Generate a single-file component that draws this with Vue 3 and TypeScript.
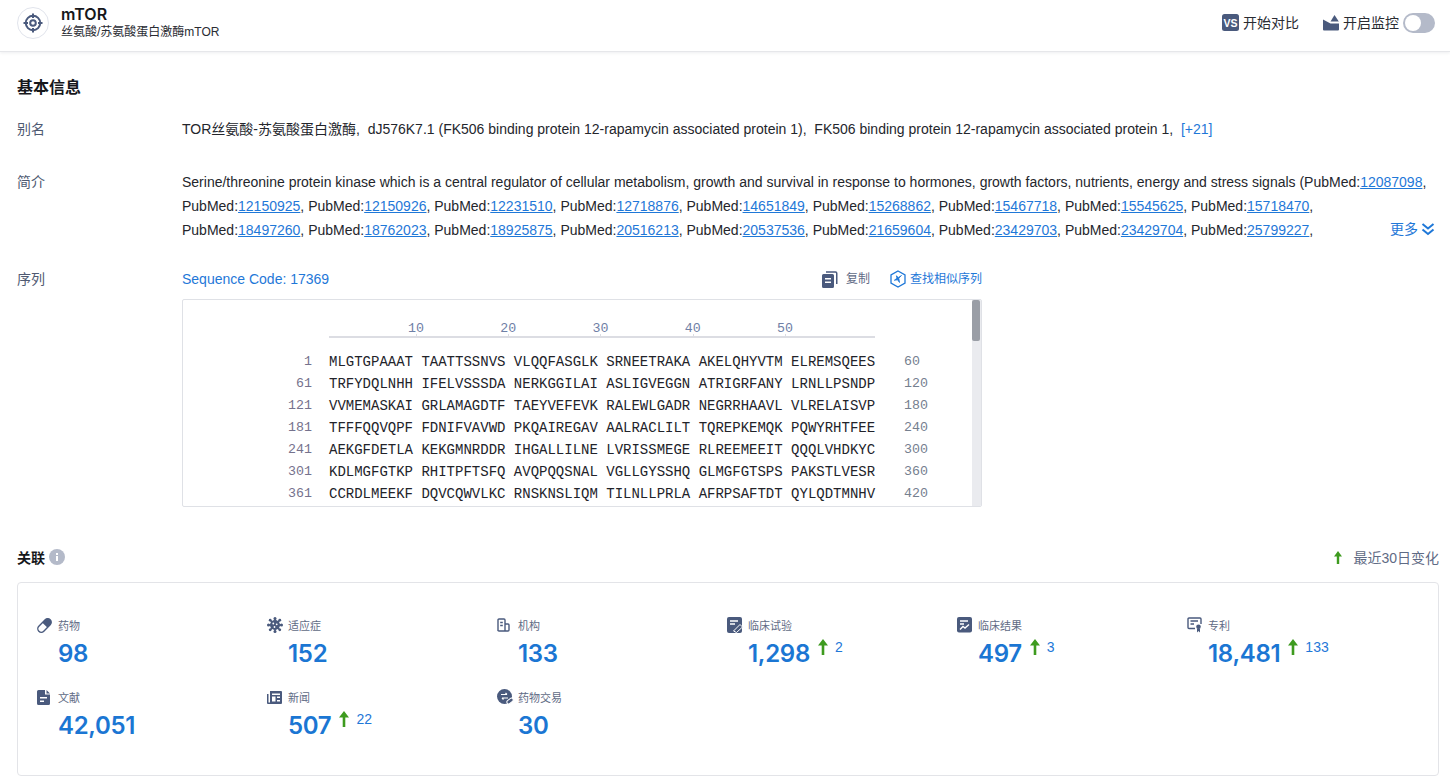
<script setup lang="ts">
interface Stat { key: string; label: string; value: string; delta?: string }
const stats: Stat[] = [
  { key: 'pill', label: '药物', value: '98' },
  { key: 'virus', label: '适应症', value: '152' },
  { key: 'org', label: '机构', value: '133' },
  { key: 'trial', label: '临床试验', value: '1,298', delta: '2' },
  { key: 'result', label: '临床结果', value: '497', delta: '3' },
  { key: 'patent', label: '专利', value: '18,481', delta: '133' },
  { key: 'doc', label: '文献', value: '42,051' },
  { key: 'news', label: '新闻', value: '507', delta: '22' },
  { key: 'deal', label: '药物交易', value: '30' },
]
const line2 = ['12150925', '12150926', '12231510', '12718876', '14651849', '15268862', '15467718', '15545625', '15718470']
const line3 = ['18497260', '18762023', '18925875', '20516213', '20537536', '21659604', '23429703', '23429704', '25799227']
const rows = [
  ['1', 'MLGTGPAAAT TAATTSSNVS VLQQFASGLK SRNEETRAKA AKELQHYVTM ELREMSQEES', '60'],
  ['61', 'TRFYDQLNHH IFELVSSSDA NERKGGILAI ASLIGVEGGN ATRIGRFANY LRNLLPSNDP', '120'],
  ['121', 'VVMEMASKAI GRLAMAGDTF TAEYVEFEVK RALEWLGADR NEGRRHAAVL VLRELAISVP', '180'],
  ['181', 'TFFFQQVQPF FDNIFVAVWD PKQAIREGAV AALRACLILT TQREPKEMQK PQWYRHTFEE', '240'],
  ['241', 'AEKGFDETLA KEKGMNRDDR IHGALLILNE LVRISSMEGE RLREEMEEIT QQQLVHDKYC', '300'],
  ['301', 'KDLMGFGTKP RHITPFTSFQ AVQPQQSNAL VGLLGYSSHQ GLMGFGTSPS PAKSTLVESR', '360'],
  ['361', 'CCRDLMEEKF DQVCQWVLKC RNSKNSLIQM TILNLLPRLA AFRPSAFTDT QYLQDTMNHV', '420'],
]
const ruler = ['10', '20', '30', '40', '50']
</script>

<template>
  <div class="page">
    <header class="topbar">
      <div class="brand">
        <span class="logo">
          <svg width="20" height="20" viewBox="0 0 20 20" fill="none" stroke="#4a5a7d" stroke-width="2">
            <circle cx="10" cy="10" r="7.2" />
            <circle cx="10" cy="10" r="2.8" />
            <path d="M10 0.5V5M10 15V19.500M0.500 10H5M15 10H19.500" />
          </svg>
        </span>
        <div>
          <div class="title">mTOR</div>
          <div class="subtitle">丝氨酸/苏氨酸蛋白激酶mTOR</div>
        </div>
      </div>
      <div class="actions">
        <span class="action">
          <svg width="17" height="17" viewBox="0 0 17 17">
            <rect width="17" height="17" rx="2.500" fill="#4a5a7d" />
            <text x="8.500" y="12.600" text-anchor="middle" class="vs-text">VS</text>
          </svg>
          开始对比
        </span>
        <span class="action monitor">
          <svg width="16" height="16" viewBox="0 0 16 16" fill="#4a5a7d">
            <path d="M0 4.500L7.500 8.500H16V14.500A1 1 0 0 1 15 15.500H1A1 1 0 0 1 0 14.500Z" />
            <path d="M7.500 6.500L11.500 0L15.800 6.500Z" />
          </svg>
          开启监控
        </span>
        <span class="toggle"><i></i></span>
      </div>
    </header>

    <main class="content">
      <h2 class="heading">基本信息</h2>

      <div class="row alias">
        <div class="label">别名</div>
        <div class="value-text">
          TOR丝氨酸-苏氨酸蛋白激酶,&nbsp; dJ576K7.1 (FK506 binding protein 12-rapamycin associated protein 1),&nbsp; FK506 binding protein 12-rapamycin associated protein 1,&nbsp; <span class="blue">[+21]</span>
        </div>
      </div>

      <div class="row intro">
        <div class="label">简介</div>
        <div class="value-text desc">
          <div class="line">Serine/threonine protein kinase which is a central regulator of cellular metabolism, growth and survival in response to hormones, growth factors, nutrients, energy and stress signals (PubMed:<a>12087098</a>,</div>
          <div class="line"><template v-for="id in line2" :key="id">PubMed:<a>{{ id }}</a>,&nbsp;</template></div>
          <div class="line"><template v-for="id in line3" :key="id">PubMed:<a>{{ id }}</a>,&nbsp;</template></div>
          <span class="more">更多
            <svg width="14" height="14" viewBox="0 0 14 14" fill="none" stroke="#1f78d8" stroke-width="2">
              <path d="M1.500 2L7 6.500L12.500 2M1.500 7.500L7 12L12.500 7.500" />
            </svg>
          </span>
        </div>
      </div>

      <div class="row seq">
        <div class="label">序列</div>
        <div class="seq-col">
          <div class="seq-head">
            <span class="blue">Sequence Code: 17369</span>
            <div class="seq-tools">
              <span class="tool">
                <svg width="16" height="18" viewBox="0 0 16 18" fill="#4a5a7d">
                  <path d="M1.500 4H10.500A1.500 1.500 0 0 1 12 5.500V16.500A1.500 1.500 0 0 1 10.500 18H1.500A1.500 1.500 0 0 1 0 16.500V5.500A1.500 1.500 0 0 1 1.500 4ZM3 8V9.500H9V8ZM3 11.500V13H9V11.500Z" fill-rule="evenodd" />
                  <path d="M4 1.200H13.500A2 2 0 0 1 15.500 3.200V14H14V3.200A.6.6 0 0 0 13.500 2.700H4Z" />
                </svg>
                <span>复制</span>
              </span>
              <span class="tool find">
                <svg width="16" height="18" viewBox="0 0 16 18" fill="none" stroke="#1f78d8" stroke-width="1.300">
                  <path d="M8 1L15 5V13L8 17L1 13V5Z" />
                  <path d="M11.500 5.500L8.800 8.200L9.500 12.500L7.600 9.800L4.300 10.300L7 8.200L6.300 5.800L8.300 7.500Z" fill="#1f78d8" stroke-width=".8" />
                </svg>
                <span>查找相似序列</span>
              </span>
            </div>
          </div>
          <div class="seq-box">
            <div class="seq-scroll">
              <div class="ruler">
                <span v-for="n in ruler" :key="n" class="tick">{{ n }}</span>
              </div>
              <div v-for="r in rows" :key="r[0]" class="seq-row">
                <span class="num-start">{{ r[0] }}</span>
                <span class="residues">{{ r[1] }}</span>
                <span class="num-end">{{ r[2] }}</span>
              </div>
            </div>
            <div class="scrollbar"><div class="thumb"></div></div>
          </div>
        </div>
      </div>

      <div class="assoc-head">
        <div class="assoc-title">
          <span>关联</span>
          <svg width="16" height="16" viewBox="0 0 16 16">
            <circle cx="8" cy="8" r="8" fill="#b4bac9" />
            <rect x="7" y="7" width="2" height="5" fill="#fff" />
            <rect x="7" y="4" width="2" height="2" fill="#fff" />
          </svg>
        </div>
        <div class="recent">
          <svg class="recent-arrow" width="8" height="13" viewBox="0 0 8 13" fill="#3e9b1f"><path d="M4 0L8 5.500H5.200V13H2.800V5.500H0Z" /></svg>
          最近30日变化
        </div>
      </div>

      <section class="stats">
        <div v-for="s in stats" :key="s.key" class="stat">
          <div class="stat-label">
            <span class="stat-icon">
              <svg v-if="s.key === 'pill'" width="15" height="15" viewBox="0 0 15 15">
                <g transform="rotate(-45 7.500 7.500)">
                  <rect x="-.5" y="4" width="16" height="7" rx="3.500" fill="none" stroke="#4a5a7d" stroke-width="1.400" />
                  <path d="M8 4H12A3.500 3.500 0 0 1 12 11H8Z" fill="#4a5a7d" />
                </g>
              </svg>
              <svg v-else-if="s.key === 'virus'" width="16" height="16" viewBox="0 0 16 16" fill="#4a5a7d" stroke="#4a5a7d">
                <circle cx="8" cy="8" r="5" stroke="none" />
                <path d="M8 .8V15.200M.8 8H15.200M2.900 2.900L13.100 13.100M13.100 2.900L2.900 13.100" stroke-width="1.500" />
                <g stroke="none"><circle cx="8" cy="1.500" r="1.500" /><circle cx="8" cy="14.500" r="1.500" /><circle cx="1.500" cy="8" r="1.500" /><circle cx="14.500" cy="8" r="1.500" /><circle cx="3.200" cy="3.200" r="1.400" /><circle cx="12.800" cy="3.200" r="1.400" /><circle cx="3.200" cy="12.800" r="1.400" /><circle cx="12.800" cy="12.800" r="1.400" /></g>
                <g fill="#fff" stroke="none"><circle cx="6.300" cy="6.500" r=".9" /><circle cx="9.700" cy="7.300" r=".9" /><circle cx="7.500" cy="10" r=".9" /></g>
              </svg>
              <svg v-else-if="s.key === 'org'" width="13" height="14" viewBox="0 0 13 14" fill="none" stroke="#4a5a7d" stroke-width="1.400">
                <path d="M1 13V2A1 1 0 0 1 2 1H7A1 1 0 0 1 8 2V13H2A1 1 0 0 1 1 12ZM8 6H11A1 1 0 0 1 12 7V12A1 1 0 0 1 11 13H8" />
                <path d="M3.200 4.500H5.800M3.200 7.500H5.800" />
              </svg>
              <svg v-else-if="s.key === 'trial'" width="16" height="16" viewBox="0 0 16 16">
                <rect width="15" height="16" rx="2" fill="#4a5a7d" />
                <path d="M3 4H11M3 7H8" stroke="#fff" stroke-width="1.500" />
                <path d="M6.500 14L13 7.500L15.500 10L9.500 15.500Z" fill="#4a5a7d" stroke="#fff" />
              </svg>
              <svg v-else-if="s.key === 'result'" width="15" height="16" viewBox="0 0 15 16">
                <rect width="15" height="15.500" rx="2" fill="#4a5a7d" />
                <path d="M3 4H11M3 7H7M3 12.500L6 9.500L8 11L12 7.500" fill="none" stroke="#fff" stroke-width="1.400" />
              </svg>
              <svg v-else-if="s.key === 'patent'" width="16" height="16" viewBox="0 0 16 16" fill="none" stroke="#4a5a7d" stroke-width="1.400">
                <path d="M8 11.500H2A1 1 0 0 1 1 10.500V2A1 1 0 0 1 2 1H13A1 1 0 0 1 14 2V7" />
                <path d="M3.500 4H11M3.500 7H7" />
                <circle cx="11.500" cy="9.800" r="2.300" fill="#4a5a7d" stroke="none" />
                <path d="M10 11.500V15.500L11.500 14L13 15.500V11.500Z" fill="#4a5a7d" stroke="none" />
              </svg>
              <svg v-else-if="s.key === 'doc'" width="13" height="15" viewBox="0 0 13 15">
                <path d="M1.500 0H8V4.500H13V13.500A1.500 1.500 0 0 1 11.500 15H1.500A1.500 1.500 0 0 1 0 13.500V1.500A1.500 1.500 0 0 1 1.500 0ZM3 7V8.500H10V7ZM3 10.500V12H7V10.500Z" fill="#4a5a7d" fill-rule="evenodd" />
                <path d="M9.500 0L13 3.500H9.500Z" fill="#4a5a7d" />
              </svg>
              <svg v-else-if="s.key === 'news'" width="15" height="13" viewBox="0 0 15 13">
                <path d="M3 0H14A1 1 0 0 1 15 1V12A1 1 0 0 1 14 13H1A1 1 0 0 1 0 12V3H1.500V11.500H3ZM5 2.500V4H13V2.500ZM5 5.500V10.500H8.500V5.500ZM10 5.500V7H13V5.500ZM10 9V10.500H13V9Z" fill="#4a5a7d" fill-rule="evenodd" />
              </svg>
              <svg v-else width="17" height="16" viewBox="0 0 17 16">
                <circle cx="7.500" cy="7.500" r="7.500" fill="#4a5a7d" />
                <path d="M4 5.500H10M8.500 4L10 5.500M11 9H5M6.500 10.500L5 9" stroke="#fff" stroke-width="1.200" fill="none" />
                <rect x="9.500" y="10.200" width="7" height="3.600" rx="1.800" transform="rotate(-40 13 12)" fill="#4a5a7d" stroke="#fff" />
              </svg>
            </span>
            <span>{{ s.label }}</span>
          </div>
          <div class="stat-value">
            <span class="number">{{ s.value }}</span>
            <template v-if="s.delta">
              <svg class="up" width="10" height="16" viewBox="0 0 10 16" fill="#3e9b1f"><path d="M5 0L10 6.500H6.300V16H3.700V6.500H0Z" /></svg>
              <span class="delta">{{ s.delta }}</span>
            </template>
          </div>
        </div>
      </section>
    </main>
  </div>
</template>

<style scoped>
.page {
  width: 1450px;
  height: 780px;
  overflow: hidden;
  background: #fff;
  color: #1e1f24;
  font-family: "Liberation Sans", "Noto Sans CJK SC", sans-serif;
  font-size: 14px;
}
.topbar {
  height: 52px;
  box-sizing: border-box;
  padding: 0 15px 6px 17px;
  display: flex;
  justify-content: space-between;
  align-items: center;
  border-bottom: 1px solid #e6e7ea;
  box-shadow: 0 1px 3px rgba(30, 40, 70, .08);
}
.brand { display: flex; align-items: center; gap: 12px; }
.logo {
  width: 32px; height: 32px; box-sizing: border-box;
  border: 1px solid #e1e4ec; border-radius: 50%;
  display: flex; align-items: center; justify-content: center;
}
.title { font-family: Inter, "Noto Sans CJK SC", sans-serif; font-size: 16px; font-weight: 600; line-height: 18px; color: #16171b; }
.subtitle { font-size: 12px; line-height: 16px; margin-top: 1px; color: #2a2c33; }
.vs-text { font-family: "Liberation Sans", sans-serif; font-size: 10.500px; font-weight: 700; fill: #fff; }
.actions { display: flex; align-items: center; }
.action { display: flex; align-items: center; gap: 4px; color: #2a2c33; line-height: 18px; }
.monitor { margin-left: 24px; }
.toggle { width: 32px; height: 20px; margin-left: 4px; border-radius: 10px; background: #b4bac9; display: block; position: relative; }
.toggle i { position: absolute; left: 2px; top: 2px; width: 16px; height: 16px; border-radius: 50%; background: #fff; }
.content { padding: 0 11px 0 17px; }
.heading { margin: 25px 0 0; font-size: 16px; line-height: 22px; font-weight: 700; color: #16171b; }
.row { display: flex; }
.label { width: 165px; flex: none; color: #4f5a72; font-size: 14px; line-height: 24px; }
.alias { margin-top: 18px; }
.intro { margin-top: 29px; }
.value-text { line-height: 24px; color: #24262c; white-space: nowrap; }
.blue { color: #1f78d8; }
.desc { position: relative; flex: 1; }
.desc a { color: #1f78d8; text-decoration: underline; }
.more { position: absolute; right: 4px; top: 47px; display: flex; align-items: center; gap: 3px; color: #1f78d8; font-size: 14px; }
.seq { margin-top: 25px; }
.seq-col { width: 800px; }
.seq-head { display: flex; justify-content: space-between; align-items: center; height: 24px; line-height: 24px; }
.seq-tools { display: flex; gap: 20px; font-size: 12px; }
.tool { display: flex; align-items: center; gap: 8px; color: #5f6b85; }
.find { color: #1f78d8; gap: 4px; }
.seq-box {
  margin-top: 8px; height: 208px; box-sizing: border-box;
  border: 1px solid #dfe1e6; border-radius: 2px;
  display: flex; overflow: hidden;
}
.seq-scroll { flex: 1; overflow: hidden; font-family: "Liberation Mono", "Courier New", monospace; font-size: 14px; }
.ruler {
  margin: 18px 0 0 146px; width: 546px; height: 20px; box-sizing: border-box;
  border-bottom: 2px solid #dcdde3; display: flex; padding-left: 2.600px;
}
.tick { width: 92.300px; flex: none; text-align: right; box-sizing: border-box; color: #6f80a6; font-size: 13.300px; line-height: 22px; height: 18px; position: relative; }
.tick::after { content: ""; position: absolute; right: 7px; bottom: 0; width: 1px; height: 2px; background: #dcdde3; }
.seq-row { display: flex; height: 22px; line-height: 22px; }
.ruler + .seq-row { margin-top: 13px; }
.num-start { width: 129px; flex: none; text-align: right; color: #75728d; font-size: 13.300px; }
.residues { margin-left: 17px; width: 546px; flex: none; white-space: pre; color: #22232a; font-size: 14px; }
.num-end { margin-left: 29px; color: #75808f; font-size: 13.300px; }
.scrollbar { width: 9px; background: #eaebef; flex: none; }
.thumb { width: 8px; height: 41px; border-radius: 2px; background: #9a9ea6; }
.assoc-head { display: flex; justify-content: space-between; align-items: center; margin-top: 38px; height: 24px; }
.assoc-title { display: flex; align-items: center; gap: 4px; font-size: 14px; font-weight: 700; color: #16171b; }
.recent { display: flex; align-items: center; color: #5f6b85; font-size: 14px; }
.recent-arrow { margin-right: 11px; }
.stats {
  margin-top: 13px; height: 194px; box-sizing: border-box;
  border: 1px solid #e3e4e8; border-radius: 4px;
  padding: 30px 19px 0;
  display: grid; grid-template-columns: repeat(6, 230px); grid-auto-rows: 72px;
}
.stat-label { display: flex; align-items: center; height: 24px; font-size: 11px; color: #5f6b85; }
.stat-icon { width: 21px; flex: none; display: flex; align-items: center; }
.stat-value { display: flex; align-items: flex-start; margin: 1px 0 0 21px; }
.number { font-family: Inter, sans-serif; font-size: 24px; letter-spacing: -.3px; font-weight: 600; line-height: 32px; color: #1b76d3; }
.up { margin: 0 0 0 8px; position: relative; top: 1px; }
.delta { margin-left: 7px; font-family: "Liberation Sans", sans-serif; font-size: 14px; line-height: 18px; color: #1f78d8; }
</style>

<style>
html, body { margin: 0; background: #fff; }
</style>
